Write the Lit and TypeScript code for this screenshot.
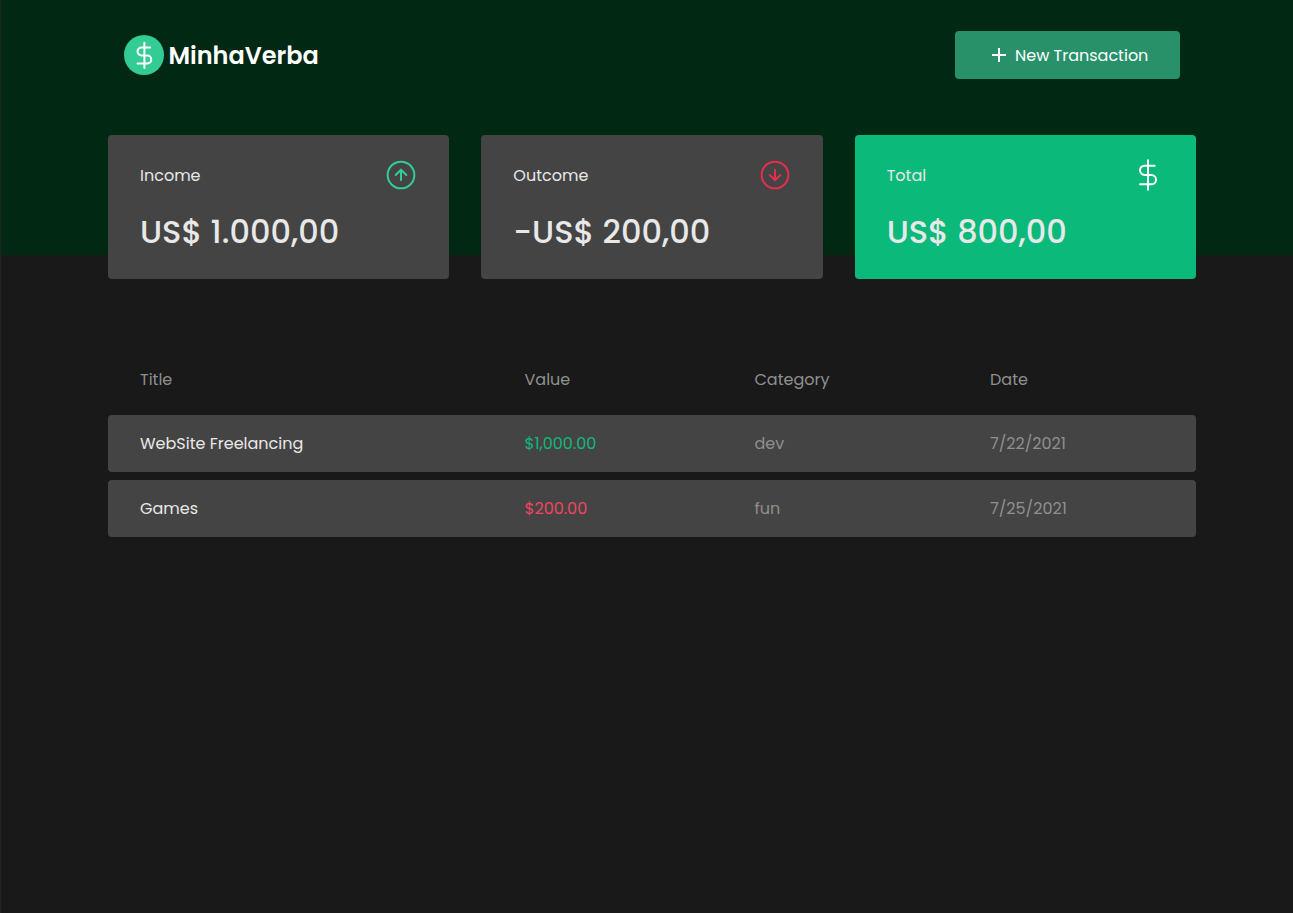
import { LitElement, html, css, svg } from "lit";
import { customElement, property } from "lit/decorators.js";
import { classMap } from "lit/directives/class-map.js";

const dollar = svg`<path d="M12 1V23M17 5H9.5a3.5 3.5 0 0 0 0 7h5a3.5 3.5 0 0 1 0 7H6" />`;

@customElement("summary-card")
class SummaryCard extends LitElement {
  @property() label = "";
  @property() amount = "";
  @property() kind = "income";

  static styles = css`
    :host { display: block; }
    .card {
      box-sizing: border-box;
      height: 144px;
      padding: 24px 32px;
      border-radius: 4px;
      background: #444444;
      color: #e8e8e8;
    }
    .card.total { background: #0bb97b; }
    .top {
      display: flex;
      align-items: center;
      justify-content: space-between;
      height: 32px;
    }
    .label { padding-top: 2px; font-size: 16px; line-height: 24px; white-space: nowrap; }
    .amount {
      display: block;
      margin-top: 17px;
      font-size: 32px;
      font-weight: 500;
      line-height: 48px;
      white-space: nowrap;
    }
    svg {
      width: 32px;
      height: 32px;
      fill: none;
      stroke-width: 2;
      stroke-linecap: round;
      stroke-linejoin: round;
    }
    .income svg { stroke: #33cc95; }
    .outcome svg { stroke: #e52e4d; }
    .total svg { stroke: #ffffff; stroke-width: 1.5; }
  `;

  icon() {
    if (this.kind === "total") return html`<svg viewBox="0 0 24 24">${dollar}</svg>`;
    const arrow =
      this.kind === "income"
        ? svg`<path d="M21.33 16L16 10.67L10.67 16M16 21.33V10.67" />`
        : svg`<path d="M10.67 16L16 21.33L21.33 16M16 10.67V21.33" />`;
    return html`<svg viewBox="0 0 32 32"><circle cx="16" cy="16" r="13.33" />${arrow}</svg>`;
  }

  render() {
    return html`
      <div class="card ${this.kind}">
        <div class="top"><span class="label">${this.label}</span>${this.icon()}</div>
        <strong class="amount">${this.amount}</strong>
      </div>
    `;
  }
}

const transactions = [
  { title: "WebSite Freelancing", value: "$1,000.00", category: "dev", date: "7/22/2021", deposit: true },
  { title: "Games", value: "$200.00", category: "fun", date: "7/25/2021", deposit: false },
];

@customElement("app-root")
class AppRoot extends LitElement {
  static styles = css`
    :host {
      display: block;
      box-sizing: border-box;
      min-height: 100vh;
      border-left: 1px solid #232323;
      background: #191919;
      font-family: Poppins, Inter, "Open Sans", sans-serif;
      font-size: 16px;
      line-height: 24px;
    }
    .header {
      box-sizing: border-box;
      height: 255px;
      padding: 31px 113px 0 123px;
      display: flex;
      align-items: flex-start;
      justify-content: space-between;
      background: #012813;
    }
    .brand { display: flex; align-items: center; gap: 4.5px; height: 48px; }
    .brand svg { width: 40px; height: 40px; fill: none; }
    .brand g { stroke: #ffffff; stroke-width: 1.75; stroke-linecap: round; stroke-linejoin: round; }
    .name { padding-top: 2px; color: #fff; font-size: 24px; font-weight: 600; line-height: 36px; }
    .new {
      box-sizing: border-box;
      width: 225px;
      height: 48px;
      padding: 0 0 0 37px;
      display: flex;
      align-items: center;
      gap: 9px;
      border: 0;
      border-radius: 4px;
      background: #28916a;
      color: #fff;
      font: inherit;
      white-space: nowrap;
    }
    .action { padding-top: 2px; }
    .new svg { width: 14px; height: 14px; stroke: #fff; stroke-width: 2; }
    .main { padding: 0 97px 0 107px; margin-top: -120px; }
    .summary { display: grid; grid-template-columns: repeat(3, 1fr); gap: 32px; }
    .table { margin-top: 72px; display: flex; flex-direction: column; gap: 8px; }
    .row {
      box-sizing: border-box;
      height: 56px;
      display: grid;
      grid-template-columns: 384.5px 230px 235.5px 1fr;
      padding: 17px 0 15px 32px;
      color: #8f8f8f;
      border-radius: 4px;
      white-space: nowrap;
    }
    .body { background: #444444; height: 57px; }
    .title { color: #e8e8e8; }
    .deposit { color: #12b87c; }
    .withdraw { color: #f04460; }
  `;

  render() {
    return html`
      <header class="header">
        <div class="brand">
          <svg viewBox="0 0 40 40">
            <circle cx="20" cy="20" r="20" fill="#33cc95" />
            <g transform="translate(6.7 6.7) scale(1.143)">${dollar}</g>
          </svg>
          <span class="name">MinhaVerba</span>
        </div>
        <button class="new">
          <svg viewBox="0 0 14 14"><path d="M7 0V14M0 7H14" /></svg>
          <span class="action">New Transaction</span>
        </button>
      </header>
      <main class="main">
        <section class="summary">
          <summary-card kind="income" label="Income" amount="US$ 1.000,00"></summary-card>
          <summary-card kind="outcome" label="Outcome" amount="-US$ 200,00"></summary-card>
          <summary-card kind="total" label="Total" amount="US$ 800,00"></summary-card>
        </section>
        <section class="table">
          <div class="row">
            <span>Title</span><span>Value</span><span>Category</span><span>Date</span>
          </div>
          ${transactions.map(
            (t) => html`
              <div class="row body">
                <span class="title">${t.title}</span>
                <span class=${classMap({ deposit: t.deposit, withdraw: !t.deposit })}>${t.value}</span>
                <span>${t.category}</span>
                <span>${t.date}</span>
              </div>
            `
          )}
        </section>
      </main>
    `;
  }
}
